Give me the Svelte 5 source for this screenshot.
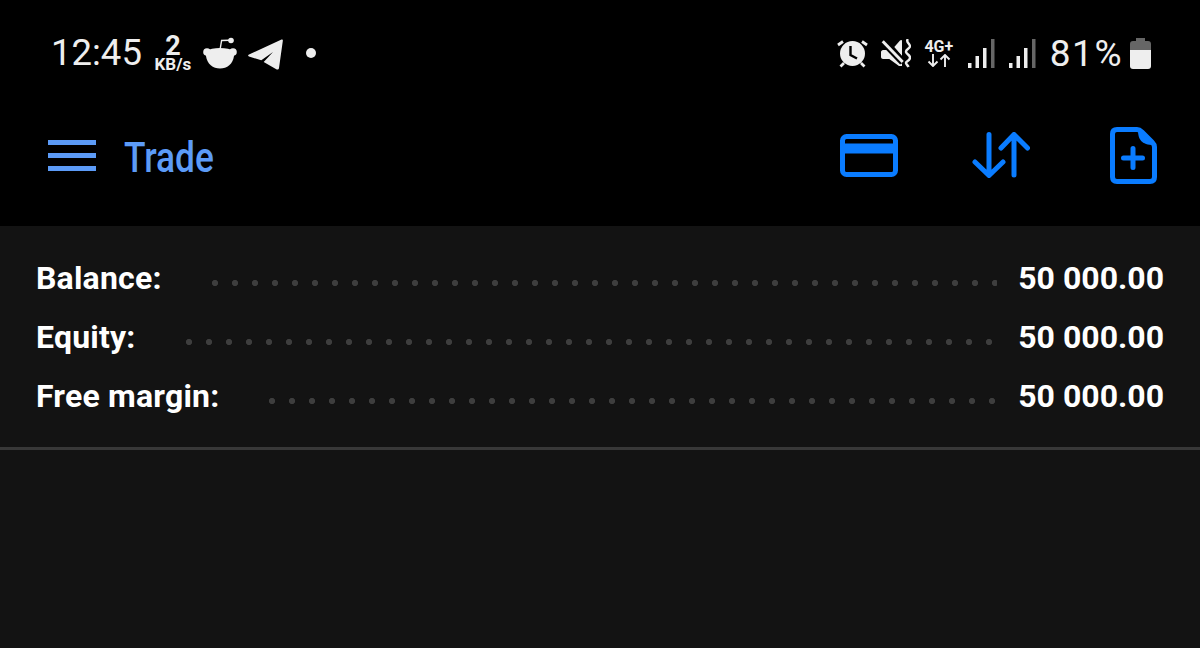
<script>
	const rows = [
		{ label: 'Balance:', value: '50 000.00' },
		{ label: 'Equity:', value: '50 000.00' },
		{ label: 'Free margin:', value: '50 000.00' }
	];
</script>

<div class="screen">
	<div class="status">
		<span class="clock">12:45</span>
		<div class="speed">
			<span class="speed-num">2</span>
			<span class="speed-unit">KB/s</span>
		</div>
		<svg class="reddit" width="34" height="32" viewBox="0 0 34 32" fill="#eee">
			<circle cx="28" cy="3.500" r="2.800" />
			<path d="M17 13 L18.600 3.500 L26 3.300" fill="none" stroke="#eee" stroke-width="1.400" />
			<circle cx="4" cy="15" r="3.800" />
			<circle cx="30" cy="15" r="3.800" />
			<path d="M3 14 C9 10 25 10 31 14 L31 19 C30 27 24 31.500 17 31.500 C10 31.500 4 27 3 19Z" />
		</svg>
		<svg class="telegram" width="36" height="31" viewBox="0 0 36 31" fill="#eee">
			<path d="M33 .8 C34.500 .2 35 1 34.800 2 L31 29 C30.800 30.500 29.500 31 28.300 30.300 L15.700 23 L25 13 L13.300 21.300 L1 17.500 C-.2 17 -.2 16 1 15.500Z" />
		</svg>
		<span class="dot"></span>

		<div class="spacer"></div>

		<svg class="alarm" width="32" height="30" viewBox="0 0 32 30" fill="#eee">
			<circle cx="15.500" cy="15.500" r="12.500" />
			<path d="M13.500 8 V17 L20 20.500" fill="none" stroke="#000" stroke-width="2.400" />
			<path d="M1 7 L6 3.500 M30 7 L25 3.500 M7 25 L3.500 28.500 M24 25 L27.500 28.500" fill="none" stroke="#eee" stroke-width="2.800" />
		</svg>
		<svg class="mute" width="30" height="29" viewBox="0 0 30 29" fill="#eee">
			<path d="M0 13 C0 12 1 11 2 11 H6 L21 25 V27 H18 L8.300 20 H2 C1 20 0 19 0 18Z" />
			<path d="M13.300 8 L19 1.500 C20 .5 21 1 21 2 V17Z" />
			<path d="M1.700 2.300 L21.700 23" fill="none" stroke="#000" stroke-width="7" />
			<path d="M1.700 2.300 L21.700 23" fill="none" stroke="#eee" stroke-width="3" />
			<path d="M27 0 C24 3 29.500 5 29 7.500 C28.500 10 24.500 10.500 25 13 C25.500 15.500 29.500 16 29 19 C28.500 22 24.500 22.500 25 24 C25.300 25.500 27 26.500 27.500 28" fill="none" stroke="#eee" stroke-width="2.400" />
		</svg>
		<div class="net">
			<span class="net-label">4G+</span>
			<svg width="24" height="13" viewBox="0 0 24 13" fill="none" stroke="#eee" stroke-width="1.900">
				<path d="M6 0 V12 M1.500 7.500 L6 12 L10.500 7.500" />
				<path d="M18 13 V1 M13.500 5.500 L18 1 L22.500 5.500" />
			</svg>
		</div>
		<svg class="signal" width="28" height="29" viewBox="0 0 28 29">
			<rect x="0" y="24" width="3.500" height="5" fill="#eee" />
			<rect x="7.500" y="17" width="3.500" height="12" fill="#eee" />
			<rect x="15" y="9" width="3.500" height="20" fill="#eee" />
			<rect x="23" y="0" width="3.500" height="29" fill="#666" />
		</svg>
		<svg class="signal" width="28" height="29" viewBox="0 0 28 29">
			<rect x="0" y="24" width="3.500" height="5" fill="#eee" />
			<rect x="7.500" y="17" width="3.500" height="12" fill="#eee" />
			<rect x="15" y="9" width="3.500" height="20" fill="#eee" />
			<rect x="23" y="0" width="3.500" height="29" fill="#666" />
		</svg>
		<span class="percent">81%</span>
		<svg class="battery" width="21" height="31" viewBox="0 0 21 31">
			<path d="M6 0 H15 V3 H18 C20 3 21 4 21 6 V13 H0 V6 C0 4 1 3 3 3 H6Z" fill="#666" />
			<path d="M0 12 H21 V28 C21 30 20 31 18 31 H3 C1 31 0 30 0 28Z" fill="#eee" />
		</svg>
	</div>

	<header class="toolbar">
		<div class="menu">
			<span></span>
			<span></span>
			<span></span>
		</div>
		<div class="title"><span>Trade</span></div>
		<div class="spacer"></div>
		<svg class="card" width="58" height="43" viewBox="0 0 58 43" fill="none" stroke="#0a7cff" stroke-width="5">
			<rect x="2.500" y="2.500" width="53" height="38" rx="4" />
			<path d="M2 14.500 H56" stroke-width="10" />
		</svg>
		<svg class="arrows" width="58" height="46" viewBox="0 0 58 46" fill="none" stroke="#0a7cff" stroke-width="5" stroke-linecap="round" stroke-linejoin="round">
			<path d="M17 2.500 V43 M3 30 L17 43.500 L31 30" />
			<path d="M42 43 V2.500 M29 16 L42 2.500 L55.500 16" />
		</svg>
		<svg class="file" width="47" height="57" viewBox="0 0 47 57" fill="none" stroke="#0a7cff" stroke-width="5" stroke-linejoin="round">
			<path d="M7 2.500 H27 C29 2.500 30.500 3.500 32 5 L42 15 C43.500 16.500 44.500 18 44.500 20 V50 C44.500 53 43 54.500 40 54.500 H7 C4 54.500 2.500 53 2.500 50 V7 C2.500 4 4 2.500 7 2.500Z" />
			<path d="M28 3 C28 12 31 18 44 18 Z" fill="#0a7cff" stroke="none" />
			<path d="M23 21.500 V40.500 M13.500 31 H32.500" stroke-width="5" stroke-linecap="round" />
		</svg>
	</header>

	<section class="account">
		{#each rows as row}
			<div class="row">
				<span class="label">{row.label}</span>
				<span class="leader"></span>
				<span class="value">{row.value}</span>
			</div>
		{/each}
	</section>
</div>

<style>
	:global(body) {
		background: #131313;
	}

	.screen {
		width: 1200px;
		height: 648px;
		overflow: hidden;
		display: flex;
		flex-direction: column;
		background: #131313;
		font-family: Roboto, "Noto Sans", sans-serif;
	}

	.spacer {
		flex: 1;
	}

	.status {
		height: 108px;
		box-sizing: border-box;
		padding: 0 49px 2px 51px;
		background: #000;
		color: #eee;
		display: flex;
		align-items: center;
	}

	.clock,
	.percent {
		font-size: 36.500px;
		font-weight: 400;
		line-height: 1;
	}

	.percent {
		font-size: 37px;
		letter-spacing: 1.500px;
	}

	.speed {
		margin-left: 12px;
		width: 38px;
		display: flex;
		flex-direction: column;
		align-items: center;
		font-weight: 700;
		line-height: 1;
	}

	.speed-num {
		font-size: 27px;
		height: 23px;
	}

	.speed-unit {
		font-size: 17px;
	}

	.reddit {
		margin-left: 11px;
	}

	.telegram {
		margin-left: 11px;
		margin-top: 2px;
	}

	.dot {
		width: 10px;
		height: 10px;
		border-radius: 50%;
		background: #eee;
		margin-left: 22px;
	}

	.alarm {
		margin-right: 12px;
	}

	.mute {
		margin-right: 13px;
	}

	.net {
		width: 30px;
		margin-right: 14px;
		display: flex;
		flex-direction: column;
		align-items: center;
	}

	.net-label {
		font-size: 16px;
		font-weight: 700;
		line-height: 15px;
	}

	.signal {
		margin-right: 13px;
	}

	.battery {
		margin-left: 7px;
	}

	.toolbar {
		height: 118px;
		box-sizing: border-box;
		padding: 0 43px 24px 48px;
		background: #000;
		display: flex;
		align-items: center;
	}

	.menu {
		width: 48px;
		display: flex;
		flex-direction: column;
		gap: 8px;
	}

	.menu span {
		height: 5px;
		background: #5c9bf7;
	}

	.title {
		margin: 4px 0 0 28px;
		color: #5c9bf7;
		font-size: 43px;
		font-weight: 500;
		line-height: 1;
	}

	.title span {
		display: inline-block;
		transform: scaleX(0.82);
		transform-origin: left center;
	}

	.card {
		margin-right: 74px;
	}

	.arrows {
		margin-right: 80px;
	}

	.account {
		box-sizing: border-box;
		height: 224px;
		padding: 22px 36px 0;
		border-bottom: 3px solid #383838;
	}

	.row {
		height: 59px;
		display: flex;
		align-items: center;
		color: #fff;
		font-size: 32px;
		font-weight: 700;
		white-space: nowrap;
	}

	.label {
		letter-spacing: 0.200px;
	}

	.leader {
		flex: 1;
		height: 6px;
		margin: 10px 21px 0 50px;
		background: radial-gradient(circle at 3px 3px, #3e3e3e 2.800px, transparent 3.300px) 0 0 / 20px 6px repeat-x;
	}
</style>
